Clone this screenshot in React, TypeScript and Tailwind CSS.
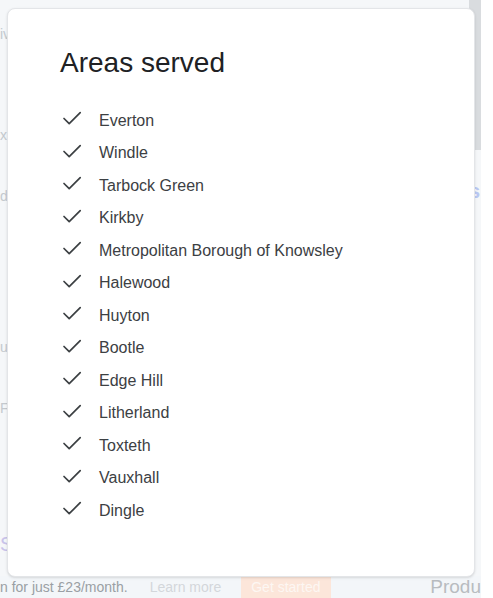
const areas = [
  "Everton",
  "Windle",
  "Tarbock Green",
  "Kirkby",
  "Metropolitan Borough of Knowsley",
  "Halewood",
  "Huyton",
  "Bootle",
  "Edge Hill",
  "Litherland",
  "Toxteth",
  "Vauxhall",
  "Dingle",
];

const CheckIcon = () => (
  <svg
    width="24"
    height="24"
    viewBox="0 0 24 24"
    fill="none"
    stroke="#3c4043"
    strokeWidth="1.7"
    strokeLinecap="round"
    strokeLinejoin="round"
    className="shrink-0 mb-[3px]"
  >
    <path d="M4 11.5 L9.2 16.7 L20.2 5.7" />
  </svg>
);

const App = () => {
  return (
    <div
      className="relative w-[493px] h-[598px] overflow-hidden flex bg-white"
      style={{ fontFamily: '"Liberation Sans", Arial, sans-serif' }}
    >
      {/* faded page behind the dialog */}
      <div className="w-[481px] h-full flex flex-col bg-[#f5f7f9] text-[#c4c9ce]">
        <div className="flex-1 flex">
          <div className="w-[30px] flex flex-col text-[14px] pt-[24px] gap-[40px]">
            <span>iv</span>
            <span className="mt-[40px]">x</span>
            <span>d,</span>
            <span className="mt-[90px]">u</span>
            <span>F</span>
            <span className="mt-[70px] text-[#c9c3ea] text-[20px]">S</span>
          </div>
          <div className="flex-1" />
          <div className="w-[12px] flex flex-col">
            <div className="h-[150px] bg-[#d9dcdf]" />
            <span className="mt-[26px] text-[#b9c8f2] text-[20px] font-bold">s</span>
          </div>
        </div>
        <div className="h-[22px] flex items-center text-[14px] bg-[#f3f6f9]">
          <span className="text-[#9a9fa4]">n for just £23/month.</span>
          <span className="ml-[22px] text-[#d3d7db]">Learn more</span>
          <span className="ml-[20px] h-full px-[10px] flex items-center bg-[#fce6da] text-[#fdf7f3]">
            Get started
          </span>
          <span className="ml-auto text-[19px] leading-[22px] text-[#b8bcc0]">
            Produ
          </span>
        </div>
      </div>

      {/* dialog */}
      <div className="absolute left-[7px] top-[8px] w-[468px] h-[569px] rounded-[8px] bg-white border border-[#e3e5e8] shadow-sm pl-[52px] pt-[38px]">
        <h2 className="text-[28px] leading-[32px] text-[#202124] font-normal">
          Areas served
        </h2>
        <ul className="mt-[25.5px] flex flex-col">
          {areas.map((area) => (
            <li key={area} className="flex items-center h-[32.5px] gap-[15px]">
              <CheckIcon />
              <span className="text-[16px] text-[#3c4043]">{area}</span>
            </li>
          ))}
        </ul>
      </div>
    </div>
  );
};

export default App;
